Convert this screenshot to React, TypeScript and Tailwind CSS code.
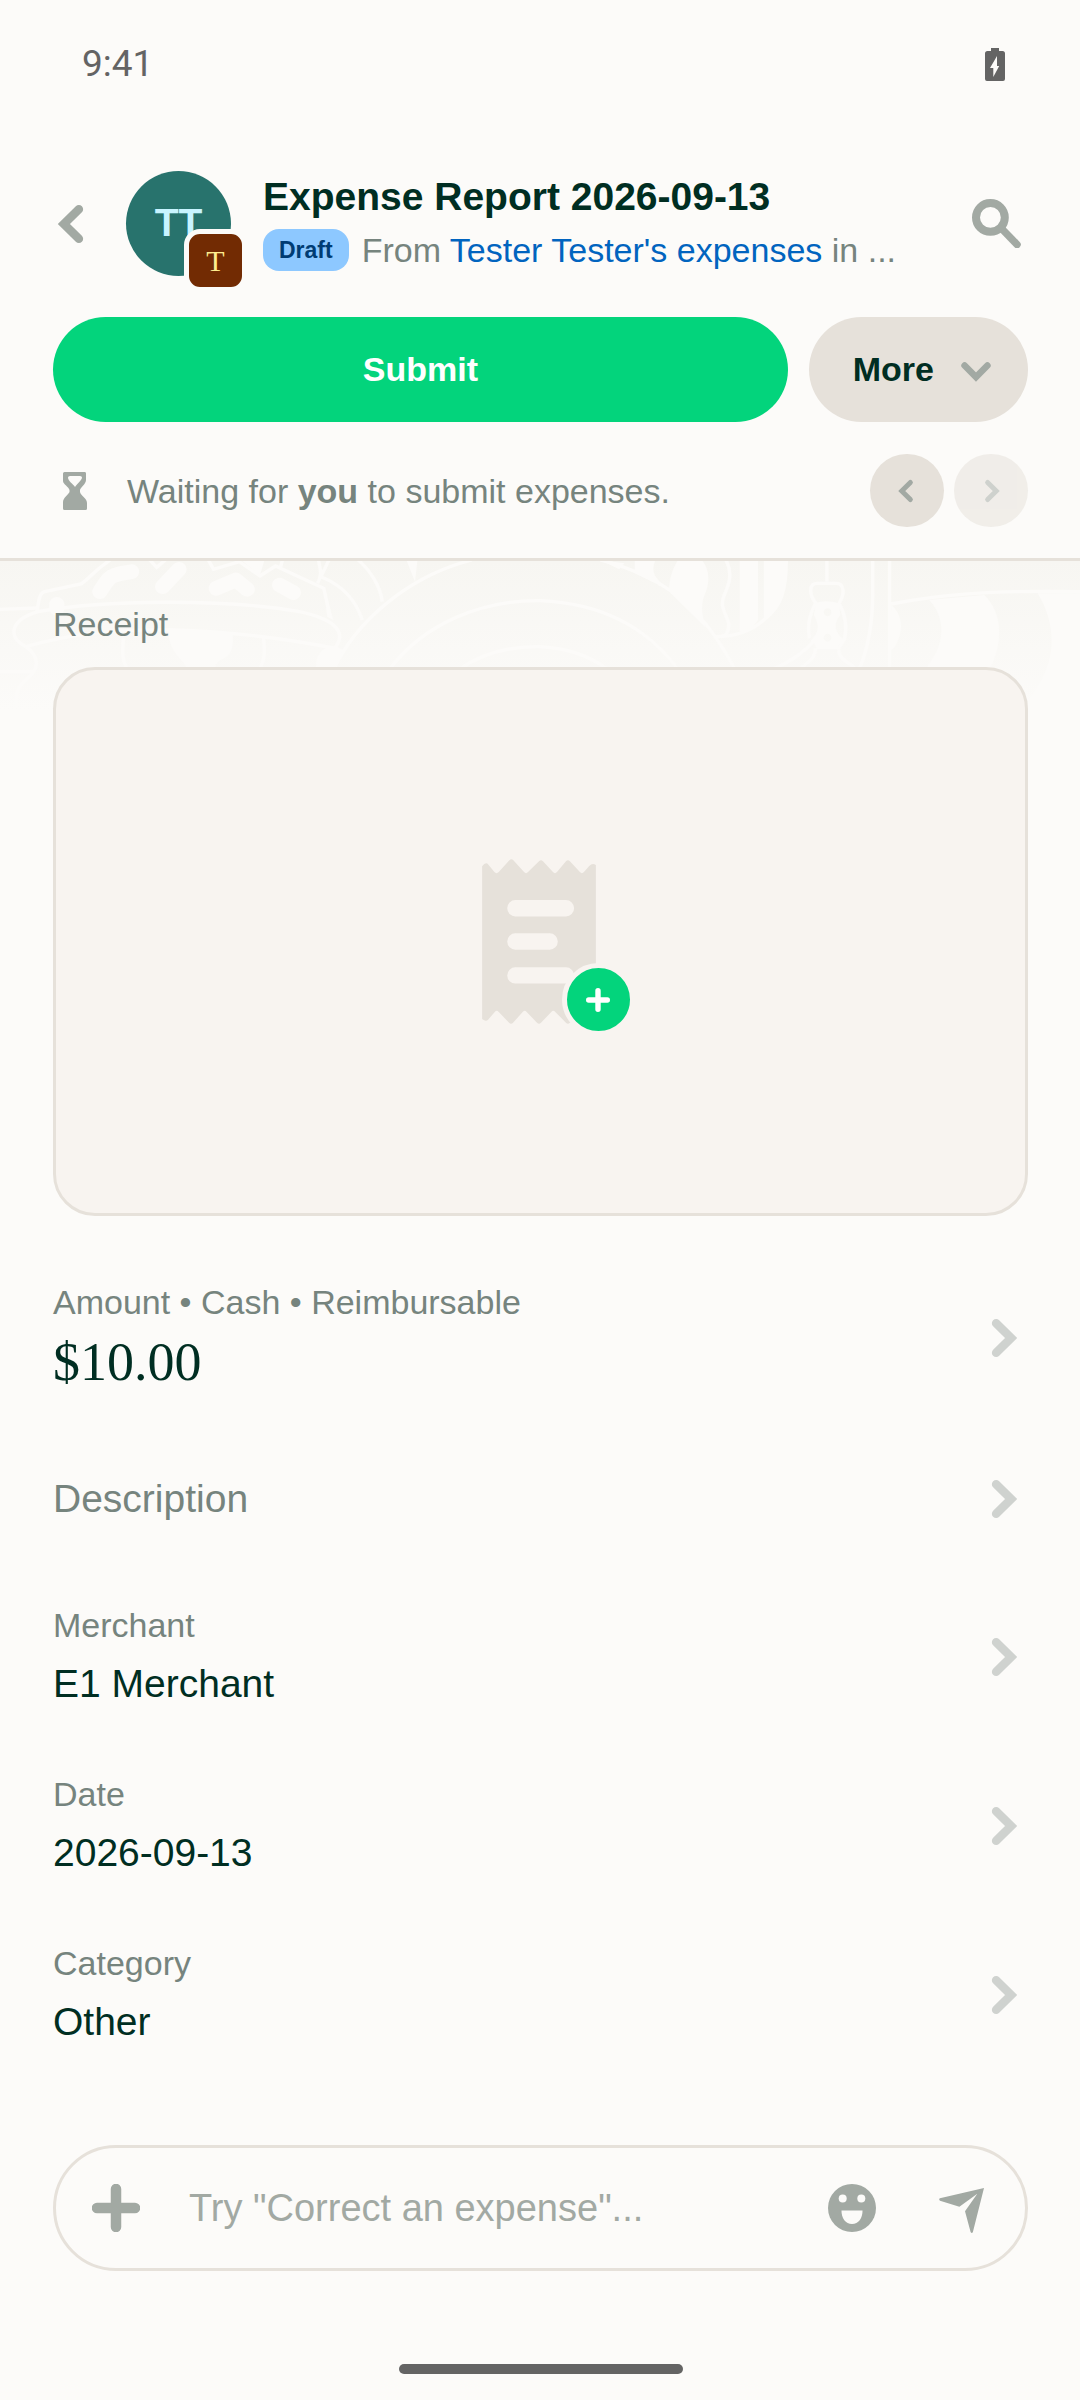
import clsx from 'clsx'

type Field = {
  id: string
  label: string
  value: string
}

const FIELDS: Field[] = [
  { id: 'merchant', label: 'Merchant', value: 'E1 Merchant' },
  { id: 'date', label: 'Date', value: '2026-09-13' },
  { id: 'category', label: 'Category', value: 'Other' },
]

function Chevron({ className }: { className?: string }) {
  return (
    <svg viewBox="0 0 40 40" fill="none" className={clsx('shrink-0', className)} aria-hidden="true">
      <path d="M15.500 8.600 27 20 15.500 31.400" stroke="currentColor" strokeWidth="6.600" strokeLinecap="round" />
    </svg>
  )
}

function BatteryIcon() {
  return (
    <svg viewBox="0 0 20 33" className="h-[33px] w-5 text-[#646464]" aria-hidden="true">
      <path
        fill="currentColor"
        fillRule="evenodd"
        d="M6 0h8v3h3.500q2.500 0 2.500 2.500V31q0 2-2 2H2q-2 0-2-2V5.500Q0 3 2.500 3H6zM12 8 5 20h3.300v9L14.200 18H12z"
      />
    </svg>
  )
}

function SearchIcon() {
  return (
    <svg viewBox="0 0 49 49" fill="none" className="size-[49px]" aria-hidden="true">
      <circle cx="18.400" cy="18.400" r="14.400" stroke="currentColor" strokeWidth="8" />
      <path d="M30 30 45 45.500" stroke="currentColor" strokeWidth="7.500" strokeLinecap="round" />
    </svg>
  )
}

function HourglassIcon() {
  return (
    <svg viewBox="0 0 24 38" className="h-[38px] w-6" aria-hidden="true">
      <path
        fill="currentColor"
        fillRule="evenodd"
        d="M0 1.500Q0 0 1.500 0H22q1 0 1 1.500V8c0 4-6 8-6 10v2c1 4 7 6 7 11v5.500q0 1.500-1.500 1.500h-21Q0 38 0 36.500V30c0-4 6-8 6.500-10v-2C6 15 0 12 0 9zM5 5.500C5 9 10 12 12 15c2-3 7-7 7-9.500Q19 4 17 4H7Q5 4 5 5.500"
      />
    </svg>
  )
}

function EmojiIcon() {
  return (
    <svg viewBox="-24 -24 48 48" className="size-12" aria-hidden="true">
      <circle r="24" fill="currentColor" />
      <g fill="#fcfbf9">
        <circle cx="-9.300" cy="-9.500" r="4" />
        <circle cx="9.300" cy="-9.500" r="4" />
        <path d="M-10.500 2.500h21c0 8-4 13.500-10.500 13.500S-10.500 10.500-10.500 2.500" />
      </g>
    </svg>
  )
}

function SendIcon() {
  return (
    <svg viewBox="0 0 45 45" className="size-[45px]" aria-hidden="true">
      <path
        fill="currentColor"
        d="M45 0 .900 10.300q-1.500 1 .100 2.400l19.400 6L38.300 5.700 26 23.300l5.600 20.700q1.300 1.800 2.300 0z"
      />
    </svg>
  )
}

function ReceiptIcon() {
  return (
    <svg viewBox="126 116 342 496" className="h-[165px] w-[114px]" aria-hidden="true">
      <path
        fill="#e6e1da"
        d="M126 138Q137 122 145 133L163 155Q169 162 176 155L208 120Q214 113 220 120L252 155Q258 162 264 155L297 123Q303 117 309 123L339 155Q345 162 351 155L378 123Q384 117 390 123L420 155Q426 162 432 155L448 137Q457 127 468 134V600L430 575 390 608Q384 615 378 608L346 576Q340 569 334 576L303 608Q297 615 291 608L260 576Q254 569 248 576L219 608Q213 615 207 608L176 576Q170 569 164 576L144 599Q137 606 126 597Z"
      />
      <path
        d="M226 264H378M226 364H329M226 466H378"
        stroke="#f8f4f0"
        strokeWidth="49"
        strokeLinecap="round"
      />
    </svg>
  )
}

// Faint diner-table drawing that fades out behind the receipt
function Backdrop() {
  return (
    <svg
      viewBox="0 0 1080 150"
      preserveAspectRatio="xMidYMin slice"
      className="absolute inset-x-0 top-0 w-full"
      aria-hidden="true"
    >
      <defs>
        <linearGradient id="fade" x1="0" y1="0" x2="0" y2="1">
          <stop offset="0" stopColor="#f7f6f2" />
          <stop offset="1" stopColor="#fcfbf9" />
        </linearGradient>
      </defs>
      <rect width="1080" height="150" fill="url(#fade)" />
      <g fill="none" stroke="#fcfbf9" strokeWidth="10" transform="scale(.3444 .3333) translate(0 -63)">
        <path d="M0 208 110 204M0 395H100" />
        <path d="M108 215C112 180 115 158 130 155L235 132C260 115 270 95 320 60M435 60 455 82 480 60M605 60 620 88 695 65 755 108 800 78 940 145 958 225M820 60 815 80" />
        <path d="M925 60C928 85 938 100 922 130M955 60 932 110C980 130 1030 170 1052 240M1040 60C1075 90 1105 140 1110 185" />
        <path d="M75 320C20 290 30 240 110 215C300 180 650 175 870 215C960 235 1010 270 975 320" />
        <path d="M75 320C200 285 300 268 500 270C700 275 850 300 975 325M75 320C115 350 115 385 80 415C50 440 45 460 48 500" />
        <path d="M358 295C355 340 355 360 368 385M765 290C770 340 768 360 755 385" />
        <path d="M968 390C1030 250 1180 110 1370 60M1130 390C1230 250 1400 180 1568 182M1330 390C1400 340 1480 318 1568 320" />
        <path
          strokeWidth="44"
          strokeLinecap="round"
          strokeLinejoin="round"
          d="M290 155C320 105 320 105 382 95M472 140 520 88M628 145 685 120 718 148M812 135 852 158M165 193V205"
        />
        <g fill="#fcfbf9" stroke="none">
          <path d="M700 60H768L755 105ZM1180 60H1212L1205 125Z" />
          <path d="M490 265 675 282C680 335 665 350 640 360Q625 372 622 390H542C540 360 500 350 490 290Z" />
          <path d="M975 318C930 320 915 350 918 390H970L995 330ZM940 145 968 240 950 230Z" />
        </g>
      </g>
      <g fill="none" stroke="#fcfbf9" strokeWidth="10" transform="scale(.3444 .3333) translate(1568 -63)">
        <path d="M175 60C400 120 490 240 567 390M0 182C180 190 310 260 402 390M0 320C80 325 140 345 200 390" />
        <path d="M330 60C315 95 330 115 350 135M540 60C560 100 550 130 535 165C520 200 540 220 548 250C548 275 540 290 525 290" />
        <path d="M510 290C600 290 640 250 655 235C700 200 715 150 715 60" />
        <path d="M833 60V125M803 295C760 345 720 370 675 388M800 325C800 355 780 365 750 390M867 328C868 360 895 365 920 388" />
        <path d="M802 190C780 165 780 130 805 130H860C885 130 885 165 868 190" />
        <path d="M800 190C785 220 775 250 782 295M868 190C885 220 892 260 884 298L865 328" />
        <path d="M966 60V160C966 250 955 320 926 390M1015 60V390M1020 192C1150 165 1300 150 1568 155" />
        <g fill="#fcfbf9" stroke="none">
          <path d="M175 60 245 70 230 88ZM275 60H330Q318 95 332 128L275 100Z" />
          <path d="M400 60H470C490 85 495 120 480 160C465 190 470 230 480 262L375 155C375 110 385 90 400 60Z" />
          <path d="M580 60H633V240C620 262 600 272 580 275ZM650 60H717C715 150 700 210 650 240Z" />
          <path
            fillRule="evenodd"
            d="M802 188Q833 178 868 190L872 225Q845 258 872 290L884 300Q865 315 865 328H803Q800 312 786 302L800 285Q815 258 795 225ZM835 205a11 12 0 1 0 .1 0ZM835 281a11 12 0 1 0 .1 0Z"
          />
          <path d="M1130 180 1290 165C1345 220 1345 310 1305 390H1115C1185 310 1175 230 1130 180Z" />
          <path d="M1020 195C1050 220 1060 270 1030 320L1015 335ZM1445 160H1568V510H1390C1500 400 1510 270 1445 160Z" />
        </g>
      </g>
    </svg>
  )
}

function FieldRow({ label, value }: { label: string; value: string }) {
  return (
    <button type="button" className="flex min-h-[169px] w-full items-center justify-between text-left">
      <span className="flex flex-col gap-3">
        <span className="text-[34px] leading-[42px] text-[#76847e]">{label}</span>
        <span className="text-[39px] leading-[52px]">{value}</span>
      </span>
      <Chevron className="size-[52px] text-[#cfd2cf]" />
    </button>
  )
}

export default function App() {
  return (
    <div className="flex min-h-screen flex-col bg-[#fcfbf9] font-['Liberation_Sans',Arial,sans-serif] text-[#002e22]">
      <div className="flex h-[126px] items-center justify-between pt-[2px] pr-[75px] pl-[82px]">
        <span className="font-[Roboto,sans-serif] text-[37px] text-[#646464]">9:41</span>
        <BatteryIcon />
      </div>

      <header className="border-b-3 border-[#e6e1da] pt-[45px] pb-[31px]">
        <div className="flex items-center pr-[54px] pl-[47px]">
          <button type="button" aria-label="Back" className="mr-[27px] text-[#a2a9a3]">
            <Chevron className="size-[52px] rotate-180" />
          </button>
          <div className="relative flex size-[105px] shrink-0 items-center justify-center rounded-full bg-[#28736d] text-[39px] font-bold text-[#c8f4ff]">
            TT
            <span className="absolute -right-4 -bottom-4 flex size-[63px] items-center justify-center rounded-2xl border-5 border-[#fcfbf9] bg-[#722b03] font-['Liberation_Serif',serif] text-[30px] font-normal text-[#ffed8f]">
              T
            </span>
          </div>
          <div className="ml-8 min-w-0 flex-1 self-start">
            <h1 className="truncate text-[39px] leading-[52px] font-bold">Expense Report 2026-09-13</h1>
            <div className="mt-[6px] flex items-center gap-[13px]">
              <span className="rounded-2xl bg-[#8dc8ff] px-4 text-[23px] leading-[42px] font-bold text-[#003c73]">
                Draft
              </span>
              <p className="truncate text-[34px] leading-[42px] text-[#76847e]">
                From{' '}
                <a href="#workspace" className="text-[#0164bf]">
                  Tester Tester&apos;s expenses
                </a>{' '}
                in ...
              </p>
            </div>
          </div>
          <button type="button" aria-label="Search" className="flex w-[60px] justify-center text-[#a2a9a3]">
            <SearchIcon />
          </button>
        </div>

        <div className="mt-[41px] flex gap-[21px] pr-[52px] pl-[53px] text-[34px] font-bold">
          <button type="button" className="h-[105px] flex-1 rounded-full bg-[#03d47c] text-white">
            Submit
          </button>
          <button
            type="button"
            className="flex h-[105px] items-center gap-[22px] rounded-full bg-[#e6e1da] pr-8 pl-[44px]"
          >
            More
            <Chevron className="size-10 rotate-90 text-[#a2a9a3]" />
          </button>
        </div>

        <div className="mt-8 flex items-center pr-[52px] pl-[53px]">
          <span className="ml-[10px] text-[#a2a9a3]">
            <HourglassIcon />
          </span>
          <p className="ml-10 flex-1 text-[34px] leading-[42px] text-[#76847e]">
            Waiting for <strong>you</strong> to submit expenses.
          </p>
          <div className="flex gap-[10px] text-[#a2a9a3]">
            <button
              type="button"
              aria-label="Previous expense"
              className="flex h-[73px] w-[74px] items-center justify-center rounded-full bg-[#e6e1da]"
            >
              <Chevron className="size-[30px] rotate-180" />
            </button>
            <button
              type="button"
              disabled
              aria-label="Next expense"
              className="flex h-[73px] w-[74px] items-center justify-center rounded-full bg-[#e6e1da] opacity-50"
            >
              <Chevron className="size-[30px]" />
            </button>
          </div>
        </div>
      </header>

      <main className="relative flex-1 pt-[42px] pr-[52px] pl-[53px]">
        <Backdrop />
        <div className="relative">
          <h2 className="text-[34px] leading-[42px] text-[#76847e]">Receipt</h2>
          <button
            type="button"
            aria-label="Add receipt"
            className="mt-[22px] flex h-[549px] w-full items-center justify-center rounded-[42px] border-3 border-[#e6e1da] bg-[#f8f4f0] pr-1"
          >
            <span className="relative">
              <ReceiptIcon />
              <span className="absolute top-[104px] left-20 flex size-[73px] items-center justify-center rounded-full border-5 border-[#f8f4f0] bg-[#03d47c] text-white">
                <svg viewBox="0 0 24 24" className="size-6" aria-hidden="true">
                  <path d="M12 2.700V21.300M2.700 12H21.300" stroke="currentColor" strokeWidth="5.400" strokeLinecap="round" />
                </svg>
              </span>
            </span>
          </button>

          <button type="button" className="mt-[34px] flex min-h-[175px] w-full items-center justify-between text-left">
            <span className="flex flex-col gap-2">
              <span className="text-[34px] leading-[42px] text-[#76847e]">Amount • Cash • Reimbursable</span>
              <span className="font-['Liberation_Serif',serif] text-[54px] leading-[63px]">$10.00</span>
            </span>
            <Chevron className="size-[52px] text-[#cfd2cf]" />
          </button>
          <button type="button" className="flex min-h-[147px] w-full items-center justify-between text-left">
            <span className="text-[39px] leading-[52px] text-[#76847e]">Description</span>
            <Chevron className="size-[52px] text-[#cfd2cf]" />
          </button>
          {FIELDS.map((field) => (
            <FieldRow key={field.id} label={field.label} value={field.value} />
          ))}
        </div>
      </main>

      <footer className="pt-[66px] pr-[52px] pb-[26px] pl-[53px]">
        <form
          className="flex h-[126px] items-center rounded-full border-3 border-[#e6e1da] pr-[41px] pl-9 text-[#a2a9a3]"
          onSubmit={(e) => e.preventDefault()}
        >
          <button type="button" aria-label="Add attachment">
            <svg viewBox="0 0 48 48" className="size-12" aria-hidden="true">
              <path d="M24 5V43M5 24H43" stroke="currentColor" strokeWidth="10.500" strokeLinecap="round" />
            </svg>
          </button>
          <input
            type="text"
            aria-label="Message"
            placeholder={'Try "Correct an expense"...'}
            className="ml-[49px] min-w-0 flex-1 text-[38px] text-[#002e22] outline-none placeholder:text-[#a2a9a3]"
          />
          <button type="button" aria-label="Emoji" className="mr-[63px]">
            <EmojiIcon />
          </button>
          <button type="submit" aria-label="Send" className="mt-1">
            <SendIcon />
          </button>
        </form>
        <div className="mx-auto mt-[93px] h-[10px] w-[284px] rounded-full bg-[#646464]" />
      </footer>
    </div>
  )
}
